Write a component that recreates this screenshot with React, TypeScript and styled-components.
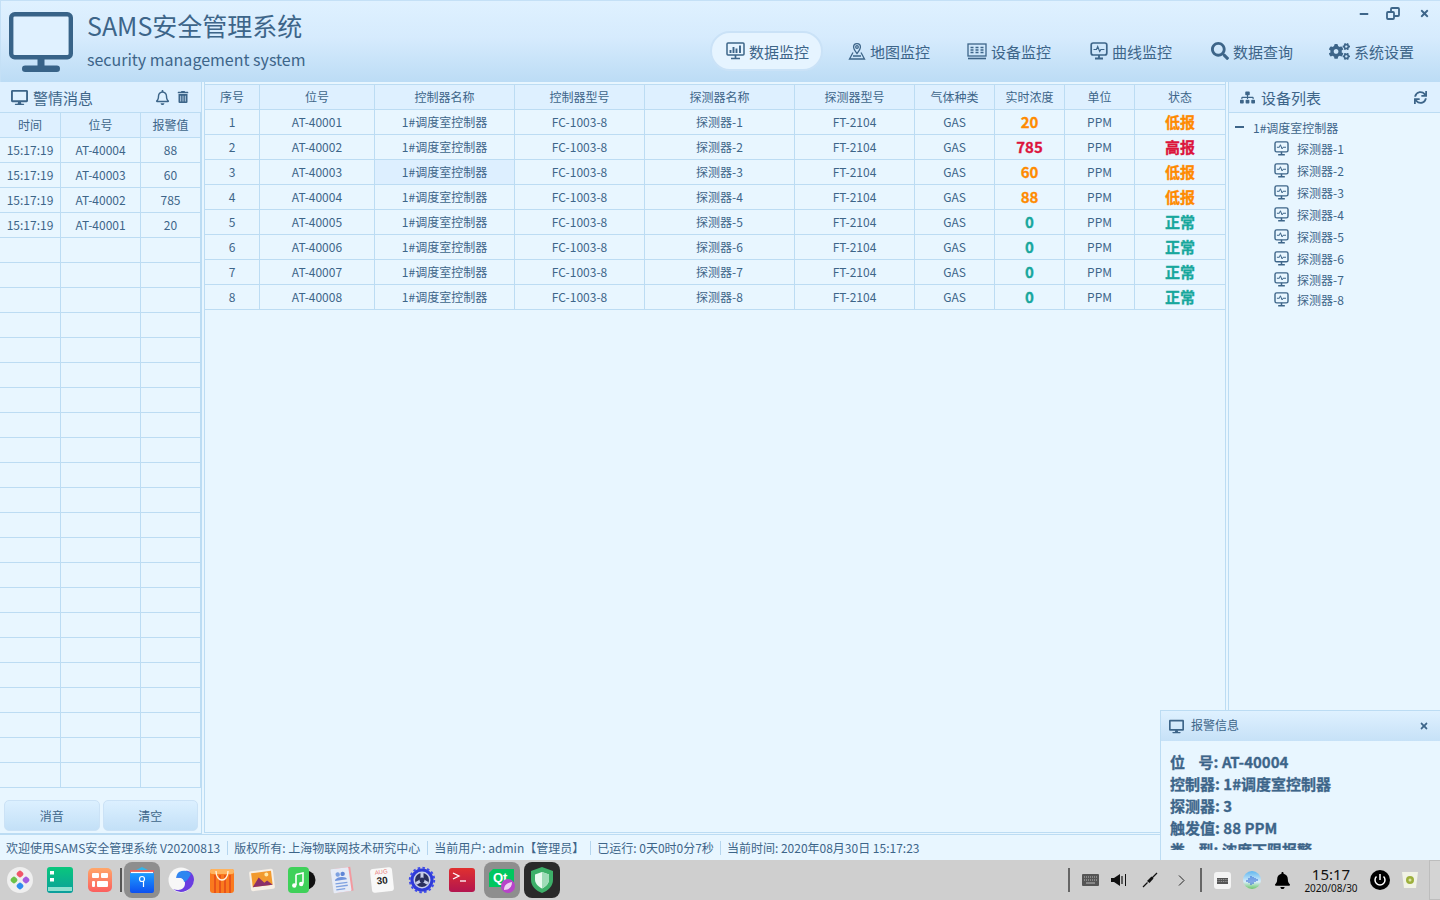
import React from 'react';
import styled, { createGlobalStyle } from 'styled-components';
import { FaDesktop, FaRegBell, FaTrashAlt, FaSitemap, FaSync, FaSearch, FaCogs, FaTimes, FaMinus, FaBell } from 'react-icons/fa';

const ink = '#3d6589';
const line = '#bcdcf3';
const panel = '#e8f6ff';
const head = '#def0ff';

const Global = createGlobalStyle`
  html, body { margin: 0; padding: 0; width: 1440px; height: 900px; overflow: hidden; }
  body { font-family: "Noto Sans CJK SC", "Noto Sans", sans-serif; color: ${ink}; background: ${panel}; }
  * { box-sizing: border-box; }
`;

const Root = styled.div`
  position: relative; width: 1440px; height: 900px; display: flex; flex-direction: column; overflow: hidden;
`;

/* header */
const Header = styled.header`
  height: 82px; flex: none; display: flex; justify-content: space-between;
  border-top: 1px solid #c4e0f6; border-left: 1px solid #c4e0f6;
  background: linear-gradient(180deg, #dff1ff 0%, #d6ebfd 45%, #bcdcf5 100%);
  padding: 0 12px 0 8px;
`;
const Brand = styled.div`display: flex; gap: 14px; padding-top: 11px;`;
const TitleBox = styled.div`display: flex; flex-direction: column; margin-top: -3px;`;
const Title = styled.div`font-size: 25px; line-height: 32px;`;
const Sub = styled.div`font-size: 16px; line-height: 24px; margin-top: 6px;`;
const HeadRight = styled.div`display: flex; flex-direction: column; align-items: flex-end;`;
const WinBtns = styled.div`display: flex; align-items: center; height: 25px; margin-right: -8px;`;
const WinBtn = styled.span<{ $w: number }>`width: ${p => p.$w}px; display: flex; justify-content: center;`;
const Nav = styled.nav`display: flex; gap: 8px; margin-top: 5px;`;
const NavItem = styled.div<{ $active?: boolean }>`
  width: 113px; height: 40px; display: flex; align-items: center; justify-content: flex-end; gap: 4px;
  padding-right: 12px; font-size: 15px; border-radius: 20px;
  background: ${p => (p.$active ? '#e6f4ff' : 'transparent')};
  border: 2px solid ${p => (p.$active ? '#cae2f7' : 'transparent')};
`;

/* body */
const Body = styled.div`flex: none; height: 752px; display: flex; background: ${panel};`;
const Left = styled.aside`
  flex: none; display: flex; flex-direction: column;
  border-left: 1px solid ${line}; border-right: 1px solid ${line}; border-bottom: 1px solid ${line};
  margin-left: -1px; width: 203px;
`;
const PanelTitle = styled.div`
  height: 31px; flex: none; display: flex; align-items: center; border-bottom: 1px solid ${line};
  font-size: 15px; background: ${head};
`;
const LeftTitle = styled(PanelTitle)`padding: 0 12px 0 11px; gap: 5px;`;
const Spacer = styled.div`flex: 1;`;
const TitleIcons = styled.div`display: flex; align-items: center; gap: 7px;`;
const Row = styled.div<{ $cols: string; $head?: boolean }>`
  display: grid; grid-template-columns: ${p => p.$cols}; height: 25px; flex: none;
  border-bottom: 1px solid ${line}; background: ${p => (p.$head ? head : panel)};
`;
const Cell = styled.div<{ $hl?: boolean }>`
  display: flex; align-items: center; justify-content: center; border-right: 1px solid ${line};
  font-size: 12px; line-height: 1; white-space: nowrap;
  background: ${p => (p.$hl ? '#ddefff' : 'transparent')};
`;
const Bold = styled.span<{ $c: string }>`
  font-size: 15px; font-weight: 700; color: ${p => p.$c}; margin-top: -2px; -webkit-text-stroke: 0.3px ${p => p.$c};
`;
const Buttons = styled.div`display: flex; gap: 3px; padding: 12px 3px 0 4px;`;
const Btn = styled.button`
  height: 31px; border: 1px solid #cbe2f6; border-radius: 5px; flex: 1; padding: 0; font: inherit; font-size: 12px; color: ${ink};
  background: linear-gradient(180deg, #dcf0ff, #c3e0f7);
`;

const Main = styled.main`
  width: 1022px; flex: none; margin-left: 2px; height: 751px; padding-top: 2px; border-left: 1px solid ${line}; border-right: 1px solid ${line}; border-bottom: 1px solid ${line};
`;
const TableTop = styled.div`border-top: 1px solid ${line};`;
const Right = styled.aside`
  width: 212px; flex: none; margin-left: 2px; border-left: 1px solid ${line}; display: flex; flex-direction: column;
`;
const RightTitle = styled(PanelTitle)`padding: 0 13px 0 11px; gap: 6px; font-size: 15px;`;
const Tree = styled.div`padding: 4px 0 0 6px; font-size: 12px;`;
const TreeRoot = styled.div`display: flex; align-items: center; height: 20px; gap: 9px;`;
const Dash = styled.span`width: 9px; height: 2px; background: ${ink};`;
const TreeItem = styled.div`
  display: flex; align-items: center; height: 22px; gap: 8px; padding-left: 39px;
  &:nth-child(8) { margin-top: -1px; }
  &:nth-child(9) { margin-top: -2px; }
`;

/* status */
const Status = styled.footer`
  height: 26px; flex: none; display: flex; align-items: center; border-top: 1px solid ${line}; background: ${panel}; font-size: 12px; padding-top: 1px;
`;
const StatusItem = styled.span`
  padding: 0 6px; line-height: 14px; white-space: nowrap;
  & + & { border-left: 1px solid #b5d5ee; margin-left: 1px; }
  &:nth-child(n + 4) { margin-left: 0; }
`;

/* popup */
const Popup = styled.section`
  position: absolute; left: 1160px; top: 710px; width: 280px; height: 150px; overflow: hidden; background: ${panel};
  border: 1px solid ${line}; border-right: 0; border-bottom: 0;
`;
const PopupHead = styled.div`
  height: 30px; display: flex; align-items: center; padding: 0 11px 0 8px; gap: 7px; font-size: 12px; line-height: 14px;
  background: linear-gradient(180deg, #dff1ff, #c6e1f7);
  & > span { margin-top: -2px; }
`;
const PopupBody = styled.div`
  height: 109px; overflow: hidden; padding: 10px 0 0 9px; font-size: 15px; font-weight: 700; line-height: 22px; -webkit-text-stroke: 0.3px ${ink};
`;
const PopLine = styled.div`white-space: pre;`;

/* taskbar */
const Taskbar = styled.div`
  height: 40px; flex: none; background: #cfcfcf; display: flex; justify-content: space-between; align-items: center; color: #000;
`;
const Dock = styled.div`display: flex; align-items: center; padding-left: 2px; gap: 4px;`;
const DockItem = styled.div<{ $bg?: string }>`
  width: 36px; height: 36px; border-radius: 8px; display: flex; align-items: center; justify-content: center;
  background: ${p => p.$bg || 'transparent'};
`;
const DockSep = styled.div`width: 2px; height: 24px; background: #555; margin: 0 -2px;`;
const Tray = styled.div`display: flex; align-items: center; height: 40px;`;
const TraySep = styled.div<{ $ml?: number }>`width: 2px; height: 24px; background: #666; margin-left: ${p => p.$ml || 0}px;`;
const TraySlot = styled.div<{ $w: number }>`width: ${p => p.$w}px; display: flex; justify-content: center; align-items: center;`;
const Clock = styled.div`display: flex; flex-direction: column; align-items: center; font-family: "Noto Sans", sans-serif; color: #111;`;
const ClockTime = styled.div`font-size: 15px; line-height: 16px;`;
const ClockDate = styled.div`font-size: 10px; line-height: 12px;`;
const ShowDesk = styled.div`width: 11px; height: 40px; margin-left: 9px; border: 1px solid #bdbdbd; border-right: 0; background: #d4d4d4;`;

/* drawings */
const BigMonitor = () => (
  <svg width="64" height="60" viewBox="0 0 64 60">
    <rect x="2.200" y="2.200" width="59.600" height="43" rx="3.500" fill="#e0f1ff" stroke="#386388" strokeWidth="4.400" />
    <rect x="28.500" y="46" width="7" height="9" fill="#386388" />
    <rect x="13" y="53.500" width="38" height="6.500" rx="3.200" fill="#386388" />
  </svg>
);
const IcoData = () => (
  <svg width="19" height="18" viewBox="0 0 19 18" fill="none" stroke={ink}>
    <rect x="1" y="1" width="17" height="12" rx="1" strokeWidth="1.500" />
    <path d="M4.500 11V8M7.500 11V5M10.500 11V6.500M14 11V3.500" strokeWidth="1.900" />
    <path d="M9.500 13v3M5 16.500h9" strokeWidth="1.700" />
  </svg>
);
const IcoMap = () => (
  <svg width="18" height="18" viewBox="0 0 18 18" fill="none" stroke={ink} strokeWidth="1.300">
    <path d="M9 11.500C7 9 5.600 7.200 5.600 5A3.400 3.400 0 0 1 12.400 5c0 2.200-1.400 4-3.400 6.500z" />
    <circle cx="9" cy="5" r="1.300" />
    <path d="M5 10.500 1.500 17h15L13 10.500M5 14h8" />
  </svg>
);
const IcoDevice = () => (
  <svg width="20" height="17" viewBox="0 0 20 17" fill="none" stroke={ink}>
    <rect x="1" y="1" width="18" height="12" strokeWidth="1.300" />
    <path d="M3.500 4.500h3M8.500 4.500h3M13.500 4.500h3M3.500 7h3M8.500 7h3M13.500 7h3M3.500 9.500h3M8.500 9.500h3M13.500 9.500h3" strokeWidth="1.700" />
    <path d="M1 15.500h18" strokeWidth="1.600" />
  </svg>
);
const IcoCurve = ({ s = 18 }: { s?: number }) => (
  <svg width={s} height={s} viewBox="0 0 18 18" fill="none" stroke={ink}>
    <rect x="1.200" y="1" width="15.600" height="12" rx="2" strokeWidth="1.700" />
    <path d="M3.500 7.500h3l1.200-3 2 5 1.200-2h3.500" strokeWidth="1.200" />
    <path d="M9 13v3M5 16.500h8" strokeWidth="1.800" />
  </svg>
);

const IcoLauncher = () => (
  <svg width="28" height="28" viewBox="0 0 28 28">
    <circle cx="14" cy="14" r="13" fill="#efefef" />
    <rect x="11" y="5" width="6" height="6" rx="2" transform="rotate(45 14 8)" fill="#f0566a" />
    <rect x="17" y="11" width="6" height="6" rx="2" transform="rotate(45 20 14)" fill="#a35ce0" />
    <rect x="5" y="11" width="6" height="6" rx="2" transform="rotate(45 8 14)" fill="#6cc24a" />
    <rect x="11" y="17" width="6" height="6" rx="2" transform="rotate(45 14 20)" fill="#2f8cf0" />
  </svg>
);
const IcoFiles = () => (
  <svg width="26" height="26" viewBox="0 0 26 26">
    <defs><linearGradient id="g1" x1="0" y1="0" x2="0" y2="1"><stop offset="0" stopColor="#0ac77c" /><stop offset="1" stopColor="#0a9e9c" /></linearGradient></defs>
    <rect width="26" height="26" rx="3" fill="url(#g1)" />
    <rect x="3" y="4" width="4" height="3.500" fill="#fff" /><rect x="3" y="11" width="4" height="3.500" fill="#fff" />
    <rect x="1" y="20" width="24" height="4" fill="#8fe0d0" />
  </svg>
);
const IcoBlocks = () => (
  <svg width="24" height="24" viewBox="0 0 24 24">
    <defs><linearGradient id="g2" x1="0" y1="0" x2="0" y2="1"><stop offset="0" stopColor="#ffa76a" /><stop offset="1" stopColor="#fb5f5f" /></linearGradient></defs>
    <rect width="24" height="24" rx="5" fill="url(#g2)" />
    <rect x="4" y="5" width="7" height="5" rx="1" fill="#fff" /><rect x="13" y="5" width="7" height="5" rx="1" fill="#fff" />
    <rect x="4" y="13" width="3" height="6" rx="1" fill="#fff" /><rect x="9" y="13" width="11" height="6" rx="1" fill="#fff" />
  </svg>
);
const IcoVault = () => (
  <svg width="28" height="28" viewBox="0 0 28 28">
    <defs><linearGradient id="g3" x1="0" y1="0" x2="0" y2="1"><stop offset="0" stopColor="#1fa0ff" /><stop offset="1" stopColor="#0d50f0" /></linearGradient></defs>
    <path d="M6 5 14 1l8 4v4H6z" fill="#35b5e8" />
    <rect x="2" y="4" width="24" height="3" fill="#e5645d" />
    <rect x="2" y="6" width="24" height="21" rx="2" fill="url(#g3)" />
    <path d="M3 6.500h22" stroke="#fff" strokeWidth="1.200" />
    <circle cx="14" cy="13" r="2.500" fill="none" stroke="#fff" strokeWidth="1.200" />
    <path d="M15.500 15v6" stroke="#fff" strokeWidth="1.200" />
  </svg>
);
const IcoSwirl = () => (
  <svg width="28" height="28" viewBox="0 0 28 28">
    <circle cx="13" cy="14" r="12.500" fill="#f7f7f7" />
    <path d="M26 14A13 13 0 0 1 5 23c6 2 12 1 12-6 0-4-4-6-8-5 2-5 7-8 11-7 4 1 6 5 6 9z" fill="#6a3de0" />
    <path d="M23 8c-3-4-8-4-12-2-2 1.500-2.500 4-3 6 4-1 8 0 8 4 3-1 5-4 7-8z" fill="#2f86f0" />
  </svg>
);
const IcoBag = () => (
  <svg width="26" height="28" viewBox="0 0 26 28">
    <rect x="1" y="3" width="24" height="24" rx="3" fill="#fa7a1e" />
    <path d="M6 9v18M11 9v18M16 9v18M21 9v18" stroke="#e8541a" strokeWidth="2" />
    <rect x="1" y="3" width="24" height="5" rx="2" fill="#ffb35e" />
    <path d="M7 5c0 12 12 12 12 0" fill="none" stroke="#fff3e0" strokeWidth="1.300" />
  </svg>
);
const IcoPhoto = () => (
  <svg width="26" height="26" viewBox="0 0 26 26">
    <g transform="rotate(-7 13 13)">
      <rect x="1" y="3" width="24" height="20" rx="2" fill="#f6efe6" />
      <rect x="3" y="5" width="20" height="14" fill="#f29a2e" />
      <circle cx="18" cy="8" r="2" fill="#ffe9a8" />
      <path d="M3 19l7-9 5 6 3-2 5 5z" fill="#8a2f6a" />
    </g>
  </svg>
);
const IcoMusic = () => (
  <svg width="28" height="26" viewBox="0 0 28 26">
    <circle cx="18" cy="13" r="9.500" fill="#111" />
    <rect x="0" y="0" width="21" height="26" rx="4" fill="#3fd15a" />
    <path d="M8 7.500 15 6v10.500" fill="none" stroke="#fff" strokeWidth="1.600" />
    <path d="M8 7.500V18" fill="none" stroke="#fff" strokeWidth="1.600" />
    <circle cx="6.300" cy="18.500" r="2.200" fill="#fff" /><circle cx="13.200" cy="17" r="2.200" fill="#fff" />
  </svg>
);
const IcoDoc = () => (
  <svg width="26" height="28" viewBox="0 0 26 28">
    <g transform="rotate(-8 13 14)">
      <rect x="5" y="2" width="18" height="24" fill="#f29aa0" />
      <rect x="3" y="2" width="18" height="24" rx="1" fill="#e6ebf6" />
      <circle cx="9.500" cy="8" r="2.200" fill="#7ea1e0" /><circle cx="14.500" cy="8" r="2.200" fill="#5f86d6" />
      <path d="M6 14c0-4 12-4 12 0z" fill="#6f93dc" />
      <path d="M6 17h12M6 20h12M6 23h9" stroke="#7ea1e0" strokeWidth="1.300" />
    </g>
  </svg>
);
const CalText = styled.text<{ $s: number; $c: string; $w?: number }>`
  font-family: "Liberation Sans", sans-serif; font-size: ${p => p.$s}px; fill: ${p => p.$c}; font-weight: ${p => p.$w || 400};
`;
const IcoCal = () => (
  <svg width="28" height="28" viewBox="0 0 28 28">
    <g transform="rotate(-6 14 14)">
      <rect x="3" y="2" width="22" height="24" rx="3" fill="#f8f8f8" />
      <CalText x="14" y="8" textAnchor="middle" $s={6} $c="#e87a78">AUG</CalText>
      <CalText x="14" y="18" textAnchor="middle" $s={10} $c="#222" $w={700}>30</CalText>
    </g>
  </svg>
);
const IcoGear = () => (
  <svg width="28" height="28" viewBox="0 0 28 28">
    <circle cx="14" cy="14" r="11.500" fill="#2f3bd8" />
    <circle cx="14" cy="14" r="12.200" fill="none" stroke="#3f4bea" strokeWidth="2" strokeDasharray="2.500 2.300" />
    <circle cx="14" cy="14" r="8.500" fill="#c7cde8" />
    <circle cx="14" cy="14" r="7" fill="#2a2f5e" />
    <path d="M14 14 14 7M14 14 20 17.500M14 14 8 17.500" stroke="#c7cde8" strokeWidth="3" />
    <circle cx="14" cy="14" r="2.500" fill="#2a2f5e" />
  </svg>
);
const IcoTerm = () => (
  <svg width="26" height="24" viewBox="0 0 26 24">
    <defs><linearGradient id="g4" x1="0" y1="0" x2="0" y2="1"><stop offset="0" stopColor="#e0302f" /><stop offset="1" stopColor="#b3154f" /></linearGradient></defs>
    <rect width="26" height="24" rx="3" fill="url(#g4)" />
    <path d="M4 5l6 3-6 3" fill="none" stroke="#fff" strokeWidth="1.300" />
    <path d="M11 13h6" stroke="#fff" strokeWidth="1.300" />
  </svg>
);
const QtLabel = styled.text`font-family: "Liberation Sans", sans-serif; font-size: 13px; font-weight: 700; fill: #fff;`;
const IcoQt = () => (
  <svg width="28" height="28" viewBox="0 0 28 28">
    <path d="M5 3h21v18H1V7z" fill="#00c75f" />
    <QtLabel x="5" y="16">Qt</QtLabel>
    <circle cx="20" cy="20" r="7" fill="#b844c9" />
    <path d="M16 24c0-5 3-7 8-8 0 5-3 8-8 8z" fill="#efd3f4" />
  </svg>
);
const IcoShield = () => (
  <svg width="28" height="28" viewBox="0 0 28 28">
    <path d="M14 1 25 5v9c0 6-5 11-11 13C8 25 3 20 3 14V5z" fill="#3db069" />
    <path d="M14 6l7 2.500v5c0 4-3 7-7 9-4-2-7-5-7-9v-5z" fill="#e9faf0" />
    <path d="M14 6l7 2.500v5c0 4-3 7-7 9z" fill="#9fdcb8" />
  </svg>
);
const IcoKeyboard = () => (
  <svg width="17" height="12" viewBox="0 0 17 12">
    <rect width="17" height="12" rx="1" fill="#555" />
    <path d="M2 3h13M2 6h13" stroke="#bbb" strokeWidth="1" strokeDasharray="1 1" />
    <path d="M4 9h9" stroke="#bbb" strokeWidth="1" />
  </svg>
);
const IcoSpeaker = () => (
  <svg width="16" height="12" viewBox="0 0 16 12">
    <path d="M0 4h3l6-4v12l-6-4H0z" fill="#111" />
    <path d="M11 2v8" stroke="#111" strokeWidth="1.200" /><path d="M14.500 0v12" stroke="#111" strokeWidth="1" />
  </svg>
);
const IcoPen = () => (
  <svg width="16" height="16" viewBox="0 0 16 16">
    <path d="M15 1 9 7" stroke="#111" strokeWidth="1.300" />
    <path d="M9.500 4.500l2 2-4 4.500L5 9z" fill="#111" />
    <path d="M5.500 10.500 1 15" stroke="#111" strokeWidth="1.300" />
  </svg>
);
const IcoChevron = () => (
  <svg width="7" height="11" viewBox="0 0 7 11"><path d="M1 .5l5 5-5 5" fill="none" stroke="#222" strokeWidth="1" /></svg>
);
const IcoKbdBtn = () => (
  <svg width="17" height="17" viewBox="0 0 17 17">
    <rect width="17" height="17" rx="3" fill="#f4f4f4" />
    <rect x="3" y="6" width="11" height="6" fill="#555" />
    <path d="M3.500 7.500h10M3.500 9.500h10" stroke="#bbb" strokeWidth=".7" strokeDasharray="1 .8" />
  </svg>
);
const IcoGlobe = () => (
  <svg width="18" height="18" viewBox="0 0 18 18">
    <defs><linearGradient id="g5" x1="0" y1="0" x2="0" y2="1"><stop offset="0" stopColor="#5fb6f0" /><stop offset=".6" stopColor="#d9eef9" /><stop offset="1" stopColor="#6cc56a" /></linearGradient></defs>
    <circle cx="9" cy="9" r="9" fill="url(#g5)" />
    <path d="M4 9v2M6 7v5M8 5v9M10 6v7M12 7v4M14 8v2" stroke="#3c6fd8" strokeWidth="1.100" />
  </svg>
);
const IcoBin = () => (
  <svg width="16" height="18" viewBox="0 0 16 18">
    <path d="M0 1h16l-2 16H2z" fill="#f1f3e6" />
    <circle cx="8" cy="9" r="4" fill="#9db03c" />
    <circle cx="8" cy="9" r="1.500" fill="#dde5a8" />
  </svg>
);
const IcoPowerRound = () => (
  <svg width="20" height="20" viewBox="0 0 20 20">
    <circle cx="10" cy="10" r="10" fill="#000" />
    <path d="M6.500 6.500a5 5 0 1 0 7 0" fill="none" stroke="#fff" strokeWidth="1.500" />
    <path d="M10 4v6" stroke="#fff" strokeWidth="1.500" />
  </svg>
);
const RestoreIcon = () => (
  <svg width="14" height="13" viewBox="0 0 14 13" fill="none" stroke={ink} strokeWidth="1.800">
    <rect x="5" y="1" width="8" height="8" rx="1" />
    <rect x="1" y="5" width="7" height="7" rx="1" fill="#dcefff" />
  </svg>
);

const MAIN_COLS = '55px 115px 140px 130px 150px 120px 80px 70px 70px 91px';
const LEFT_COLS = '61px 80px 60px';
const ORANGE = '#ff8a00';
const RED = '#dc143c';
const TEAL = '#17a79c';

const rows = [
  { v: '20', st: '低报', c: ORANGE },
  { v: '785', st: '高报', c: RED },
  { v: '60', st: '低报', c: ORANGE },
  { v: '88', st: '低报', c: ORANGE },
  { v: '0', st: '正常', c: TEAL },
  { v: '0', st: '正常', c: TEAL },
  { v: '0', st: '正常', c: TEAL },
  { v: '0', st: '正常', c: TEAL },
];
const alarms = [
  ['15:17:19', 'AT-40004', '88'],
  ['15:17:19', 'AT-40003', '60'],
  ['15:17:19', 'AT-40002', '785'],
  ['15:17:19', 'AT-40001', '20'],
];
const navs = [
  { t: '数据监控', i: <IcoData />, a: true },
  { t: '地图监控', i: <IcoMap /> },
  { t: '设备监控', i: <IcoDevice /> },
  { t: '曲线监控', i: <IcoCurve /> },
  { t: '数据查询', i: <FaSearch size={18} /> },
  { t: '系统设置', i: <FaCogs size={21} /> },
];
const mainHead = ['序号', '位号', '控制器名称', '控制器型号', '探测器名称', '探测器型号', '气体种类', '实时浓度', '单位', '状态'];
const emptyRows = Array.from({ length: 22 }, (_, i) => i);

export default function App() {
  return (
    <Root>
      <Global />
      <Header>
        <Brand>
          <BigMonitor />
          <TitleBox>
            <Title>SAMS安全管理系统</Title>
            <Sub>security management system</Sub>
          </TitleBox>
        </Brand>
        <HeadRight>
          <WinBtns>
            <WinBtn $w={20}><FaMinus size={10} /></WinBtn>
            <WinBtn $w={38}><RestoreIcon /></WinBtn>
            <WinBtn $w={24}><FaTimes size={11} /></WinBtn>
          </WinBtns>
          <Nav>
            {navs.map(n => (
              <NavItem key={n.t} $active={n.a}>{n.i}<span>{n.t}</span></NavItem>
            ))}
          </Nav>
        </HeadRight>
      </Header>
      <Body>
        <Left>
          <LeftTitle>
            <FaDesktop size={17} />
            <span>警情消息</span>
            <Spacer />
            <TitleIcons><FaRegBell size={15} /><FaTrashAlt size={12} /></TitleIcons>
          </LeftTitle>
          <Row $cols={LEFT_COLS} $head>
            <Cell>时间</Cell><Cell>位号</Cell><Cell>报警值</Cell>
          </Row>
          {alarms.map((a, i) => (
            <Row $cols={LEFT_COLS} key={i}>
              <Cell>{a[0]}</Cell><Cell>{a[1]}</Cell><Cell>{a[2]}</Cell>
            </Row>
          ))}
          {emptyRows.map(i => (
            <Row $cols={LEFT_COLS} key={i}><Cell /><Cell /><Cell /></Row>
          ))}
          <Buttons><Btn>消音</Btn><Btn>清空</Btn></Buttons>
        </Left>
        <Main>
          <TableTop>
            <Row $cols={MAIN_COLS} $head>
              {mainHead.map(h => <Cell key={h}>{h}</Cell>)}
            </Row>
            {rows.map((r, i) => (
              <Row $cols={MAIN_COLS} key={i}>
                <Cell>{i + 1}</Cell>
                <Cell>AT-4000{i + 1}</Cell>
                <Cell $hl={i === 2}>1#调度室控制器</Cell>
                <Cell>FC-1003-8</Cell>
                <Cell>探测器-{i + 1}</Cell>
                <Cell>FT-2104</Cell>
                <Cell>GAS</Cell>
                <Cell><Bold $c={r.c}>{r.v}</Bold></Cell>
                <Cell>PPM</Cell>
                <Cell><Bold $c={r.c}>{r.st}</Bold></Cell>
              </Row>
            ))}
          </TableTop>
        </Main>
        <Right>
          <RightTitle>
            <FaSitemap size={15} />
            <span>设备列表</span>
            <Spacer />
            <FaSync size={13} />
          </RightTitle>
          <Tree>
            <TreeRoot><Dash /><span>1#调度室控制器</span></TreeRoot>
            {rows.map((_, i) => (
              <TreeItem key={i}><IcoCurve s={15} /><span>探测器-{i + 1}</span></TreeItem>
            ))}
          </Tree>
        </Right>
      </Body>
      <Status>
        <StatusItem>欢迎使用SAMS安全管理系统 V20200813</StatusItem>
        <StatusItem>版权所有: 上海物联网技术研究中心</StatusItem>
        <StatusItem>当前用户: admin【管理员】</StatusItem>
        <StatusItem>已运行: 0天0时0分7秒</StatusItem>
        <StatusItem>当前时间: 2020年08月30日 15:17:23</StatusItem>
      </Status>
      <Taskbar>
        <Dock>
          <DockItem><IcoLauncher /></DockItem>
          <DockItem><IcoFiles /></DockItem>
          <DockItem><IcoBlocks /></DockItem>
          <DockSep />
          <DockItem $bg="#8e8e8e"><IcoVault /></DockItem>
          <DockItem><IcoSwirl /></DockItem>
          <DockItem><IcoBag /></DockItem>
          <DockItem><IcoPhoto /></DockItem>
          <DockItem><IcoMusic /></DockItem>
          <DockItem><IcoDoc /></DockItem>
          <DockItem><IcoCal /></DockItem>
          <DockItem><IcoGear /></DockItem>
          <DockItem><IcoTerm /></DockItem>
          <DockItem $bg="#8e8e8e"><IcoQt /></DockItem>
          <DockItem $bg="#2a2a2a"><IcoShield /></DockItem>
        </Dock>
        <Tray>
          <TraySep />
          <TraySlot $w={40}><IcoKeyboard /></TraySlot>
          <TraySlot $w={18}><IcoSpeaker /></TraySlot>
          <TraySlot $w={44}><IcoPen /></TraySlot>
          <TraySlot $w={18}><IcoChevron /></TraySlot>
          <TraySep $ml={10} />
          <TraySlot $w={40}><IcoKbdBtn /></TraySlot>
          <TraySlot $w={20}><IcoGlobe /></TraySlot>
          <TraySlot $w={40}><FaBell size={17} /></TraySlot>
          <TraySlot $w={58}><Clock><ClockTime>15:17</ClockTime><ClockDate>2020/08/30</ClockDate></Clock></TraySlot>
          <TraySlot $w={40}><IcoPowerRound /></TraySlot>
          <TraySlot $w={20}><IcoBin /></TraySlot>
          <ShowDesk />
        </Tray>
      </Taskbar>
      <Popup>
        <PopupHead>
          <FaDesktop size={15} />
          <span>报警信息</span>
          <Spacer />
          <FaTimes size={10} />
        </PopupHead>
        <PopupBody>
          <PopLine>位    号: AT-40004</PopLine>
          <PopLine>控制器: 1#调度室控制器</PopLine>
          <PopLine>探测器: 3</PopLine>
          <PopLine>触发值: 88 PPM</PopLine>
          <PopLine>类    型: 浓度下限报警</PopLine>
        </PopupBody>
      </Popup>
    </Root>
  );
}
